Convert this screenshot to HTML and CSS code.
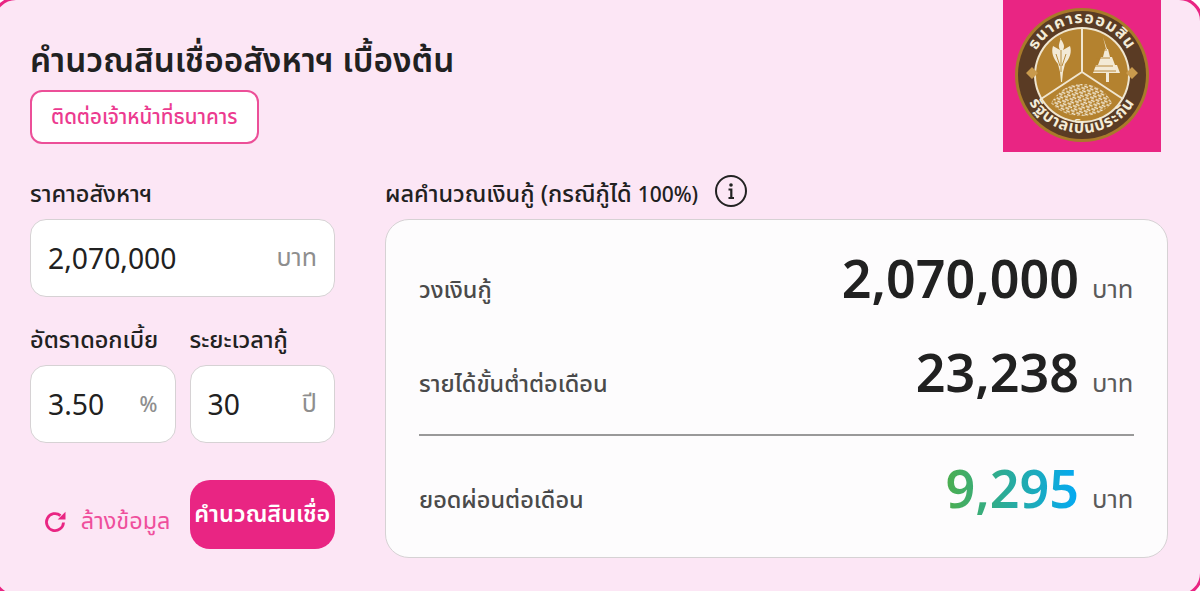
FILE: index.html
```html
<!DOCTYPE html>
<html lang="th">
<head>
<meta charset="utf-8">
<title>คำนวณสินเชื่ออสังหาฯ เบื้องต้น</title>
<link rel="stylesheet" href="styles.css">
</head>
<body>
<main class="calc">
  <header class="head">
    <div class="head-text">
      <h1 class="title">คำนวณสินเชื่ออสังหาฯ เบื้องต้น</h1>
      <a class="contact" href="#">ติดต่อเจ้าหน้าที่ธนาคาร</a>
    </div>
    <div class="logo">
      <svg viewBox="0 0 158 152" width="158" height="152" aria-hidden="true">
        <defs>
          <path id="arcTop" d="M27 75a52 52 0 0 1 104 0"/>
          <path id="arcBottom" d="M18 72a61 61 0 0 0 122 0"/>
          <pattern id="leaf" width="6" height="5" patternUnits="userSpaceOnUse" patternTransform="rotate(25)">
            <rect width="6" height="5" fill="#b4822f"/>
            <path d="M0 1h4M2 3.5h4" stroke="#f3ead6" stroke-width="1.5"/>
          </pattern>
        </defs>
        <rect width="158" height="152" fill="#e92583"/>
        <circle cx="79" cy="75" r="67" fill="#a87a2a"/>
        <circle cx="79" cy="75" r="64" fill="#5a3b24"/>
        <circle cx="79" cy="75" r="48" fill="#f0e6d0"/>
        <circle cx="79" cy="75" r="46" fill="#b4822f"/>
        <path d="M79 28V72M79 72L38 99M79 72L120 99" stroke="#f0e6d0" stroke-width="2" fill="none"/>
        <path d="M58 38c-2 6-3 8-1 12l-7-4c-2 6 0 12 5 18l2 8 1 10h1l1-10 2-8c5-6 7-12 5-18l-7 4c2-4 1-6-3-12z" fill="#f3ead6"/>
        <path d="M58 50v22M53 54l4 12M63 54l-4 12" stroke="#b4822f" stroke-width=".9" fill="none"/>
        <path d="M100 37l3 12h2l2 8h2l3 8h2l3 8h-11v9h-3v-9h-13l3-8h2l3-8h2l2-8h2z" fill="#f3ead6"/>
        <path d="M96 50h8M93 58h14M90 66h20M87 71h26" stroke="#b4822f" stroke-width=".9" fill="none"/>
        <path d="M48 103c7-12 17-19 31-19s24 7 30 19c-8 9-18 13-30 13s-23-4-31-13z" fill="url(#leaf)"/>
        <path d="M23 73l6-6 6 6-6 6zM123 73l6-6 6 6-6 6z" fill="#c99a4d"/>
        <text class="seal-text"><textPath href="#arcTop" startOffset="50%" text-anchor="middle">ธนาคารออมสิน</textPath></text>
        <text class="seal-text"><textPath href="#arcBottom" startOffset="50%" text-anchor="middle">รัฐบาลเป็นประกัน</textPath></text>
      </svg>
    </div>
  </header>
  <div class="body">
    <section class="form">
      <div class="field">
        <label class="label">ราคาอสังหาฯ</label>
        <div class="input"><span class="val">2,070,000</span><span class="unit">บาท</span></div>
      </div>
      <div class="pair">
        <div class="field">
          <label class="label">อัตราดอกเบี้ย</label>
          <div class="input"><span class="val">3.50</span><span class="unit pct">%</span></div>
        </div>
        <div class="field">
          <label class="label">ระยะเวลากู้</label>
          <div class="input"><span class="val">30</span><span class="unit">ปี</span></div>
        </div>
      </div>
      <div class="pair actions">
        <button class="reset" type="button">
          <svg viewBox="0 0 24 24" width="24" height="24" fill="none" aria-hidden="true"><path d="M20.5 12.5a8.5 8.5 0 1 1-3-6.9" stroke="#e92583" stroke-width="2.8"/><path d="M22.5 1.8V9.5h-7.8z" fill="#e92583"/></svg>
          <span>ล้างข้อมูล</span>
        </button>
        <button class="submit" type="button">คำนวณสินเชื่อ</button>
      </div>
    </section>
    <section class="result">
      <div class="result-head">
        <span class="label">ผลคำนวณเงินกู้ (กรณีกู้ได้ <span class="latin">100%)</span></span>
        <svg class="info" viewBox="0 0 32 32" width="32" height="32" fill="none" aria-hidden="true"><circle cx="16" cy="16" r="15" stroke="#222" stroke-width="2"/><circle cx="16" cy="10" r="1.8" fill="#222"/><path d="M13.5 14.5h2.8V22M13.5 23h5.5" stroke="#222" stroke-width="2.2"/></svg>
      </div>
      <div class="card">
        <div class="row r1"><span class="row-label">วงเงินกู้</span><span class="num">2,070,000</span><span class="baht">บาท</span></div>
        <div class="row r2"><span class="row-label">รายได้ขั้นต่ำต่อเดือน</span><span class="num">23,238</span><span class="baht">บาท</span></div>
        <hr class="rule">
        <div class="row r3"><span class="row-label">ยอดผ่อนต่อเดือน</span><span class="num grad">9,295</span><span class="baht">บาท</span></div>
      </div>
    </section>
  </div>
  <div class="frame"></div>
</main>
</body>
</html>
```
FILE: styles.css
```css
* { box-sizing: border-box; }
html, body { margin: 0; height: 100%; }
body {
  font-family: "Noto Sans", "Noto Sans Thai", "Noto Sans CJK SC", sans-serif;
  background: #fce6f5;
  color: #212121;
  overflow: hidden;
}
.calc { position: relative; height: 591px; padding: 0 32px 0 30px; overflow: hidden; background: #fce6f5; }
.frame {
  position: absolute; top: -3px; right: -3px; bottom: -6px; left: -8px;
  border: 3px solid #e92583; border-radius: 24px; box-shadow: 0 0 0 20px #fff; pointer-events: none;
}
.head { display: flex; justify-content: space-between; align-items: flex-start; height: 180px; padding-right: 7px; }
.head-text { padding-top: 37px; }
.title { margin: 0 0 9px; font-size: 33.3px; line-height: 44px; font-weight: 600; white-space: nowrap; }
.contact {
  display: inline-flex; align-items: center; height: 54px; padding: 0 19px;
  background: #fff; color: #ec3a8f; border: 2px solid #ec4f98; border-radius: 12px;
  font-size: 20.5px; font-weight: 500; text-decoration: none; white-space: nowrap;
}
.logo { width: 158px; height: 152px; }
.logo svg { display: block; }
.seal-text { font-size: 16px; font-weight: 700; fill: #f4ecd8; letter-spacing: 1px; }
.body { display: flex; gap: 50px; }
.form { width: 305px; flex: none; }
.label { display: block; font-size: 23.5px; line-height: 26px; font-weight: 500; color: #212121; white-space: nowrap; }
.latin { font-size: 21px; }
.field .label { margin-bottom: 13px; }
.input {
  display: flex; justify-content: space-between; align-items: center;
  height: 78px; padding: 0 17px;
  background: #fff; border: 1px solid #d6d2d4; border-radius: 16px;
}
.val { font-size: 28.3px; color: #212121; }
.unit { font-size: 25px; color: #8e8e8e; }
.pct { font-size: 21px; font-weight: 500; }
.pair { display: flex; gap: 14px; margin-top: 29px; }
.pair .field { width: 146px; }
.actions { margin-top: 37px; align-items: center; }
.reset {
  width: 146px; display: flex; align-items: center; justify-content: flex-end; gap: 14px;
  padding: 15px 5px 0 0; background: none; border: 0; color: #ef4f9c;
  font: inherit; font-size: 23.5px; white-space: nowrap;
}
.submit {
  width: 146px; height: 69px; padding: 0; background: #e92583; color: #fff; border: 0; border-radius: 20px;
  font: inherit; font-size: 23.4px; font-weight: 600; white-space: nowrap;
}
.result { flex: 1; }
.result-head { display: flex; align-items: center; gap: 17px; height: 26px; }
.info { margin-top: -5px; }
.card {
  margin-top: 13px; height: 339px; padding: 0 33px;
  background: #fdfcfd; border: 1px solid #d6d2d4; border-radius: 24px;
}
.row { display: flex; align-items: baseline; }
.r1 { margin-top: 22px; }
.r2 { margin-top: 22px; }
.r3 { margin-top: 16px; }
.row-label { flex: 1; font-size: 23.5px; line-height: 1; font-weight: 500; color: #4a4a4a; }
.num { font-size: 52px; font-weight: 600; color: #212121; line-height: 72px; }
.baht { margin-left: 13px; width: 42px; text-align: right; padding-right: 1px; font-size: 25.5px; line-height: 1; color: #5a5a5a; white-space: nowrap; }
.rule { margin: 26px 0 0; border: 0; border-top: 2px solid #999; }
.grad { background: linear-gradient(90deg, #4cae4f, #03a9f4); -webkit-background-clip: text; background-clip: text; color: transparent; }
```
